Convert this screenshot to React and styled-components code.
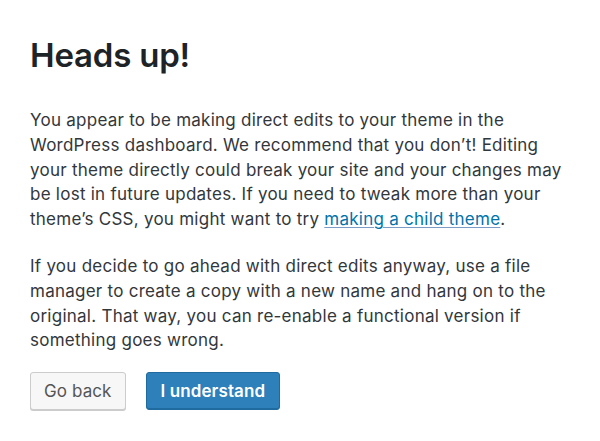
import React from 'react'
import styled, { createGlobalStyle } from 'styled-components'

const Global = createGlobalStyle`
  body {
    margin: 0;
    background: #fff;
    font-family: Inter, "Noto Sans", sans-serif;
    color: #23282d;
  }
`;

const Notice = styled.div`
  width: 600px;
  height: 441px;
  box-sizing: border-box;
  padding: 35px 30px 0 30px;
`;

const Title = styled.h1`
  margin: 0 0 33px;
  font-size: 33px;
  line-height: 40px;
  font-weight: 600;
  letter-spacing: -0.2px;
  color: #1d2327;
`;

const Text = styled.p`
  margin: 0 0 ${p => p.$gap || 0}px;
  font-size: 17px;
  line-height: 24.8px;
  letter-spacing: 0.25px;
  color: #32373c;
`;

const Link = styled.a`
  color: #0073aa;
  text-decoration: underline;
  text-decoration-color: #7a9cc6;
  text-underline-offset: 2px;
`;

const Actions = styled.div`
  display: flex;
  gap: 20px;
  margin-top: 19px;
`;

const Button = styled.button`
  height: 38px;
  padding: 0 ${p => p.$primary ? 14 : 13}px;
  border-radius: 3px;
  font-family: Inter, "Noto Sans", sans-serif;
  font-size: 17px;
  letter-spacing: 0.1px;
  font-weight: ${p => p.$primary ? 600 : 400};
  cursor: pointer;
  border: 1px solid ${p => p.$primary ? '#1f6a9e' : '#cccccc'};
  background: ${p => p.$primary ? '#2e80ba' : '#f7f7f7'};
  color: ${p => p.$primary ? '#fff' : '#555'};
  box-shadow: ${p => p.$primary ? 'inset 0 -1px 0 #1f6a9e' : '0 1px 0 #ccc'};
`;

const App = () => {
  return (
    <>
      <Global />
      <Notice>
        <Title>Heads up!</Title>
        <Text $gap={22}>
          You appear to be making direct edits to your theme in the<br />
          WordPress dashboard. We recommend that you don’t! Editing<br />
          your theme directly could break your site and your changes may<br />
          be lost in future updates. If you need to tweak more than your<br />
          theme’s CSS, you might want to try <Link href="#">making a child theme</Link>.
        </Text>
        <Text>
          If you decide to go ahead with direct edits anyway, use a file<br />
          manager to create a copy with a new name and hang on to the<br />
          original. That way, you can re-enable a functional version if<br />
          something goes wrong.
        </Text>
        <Actions>
          <Button>Go back</Button>
          <Button $primary>I understand</Button>
        </Actions>
      </Notice>
    </>
  )
}

export default App
